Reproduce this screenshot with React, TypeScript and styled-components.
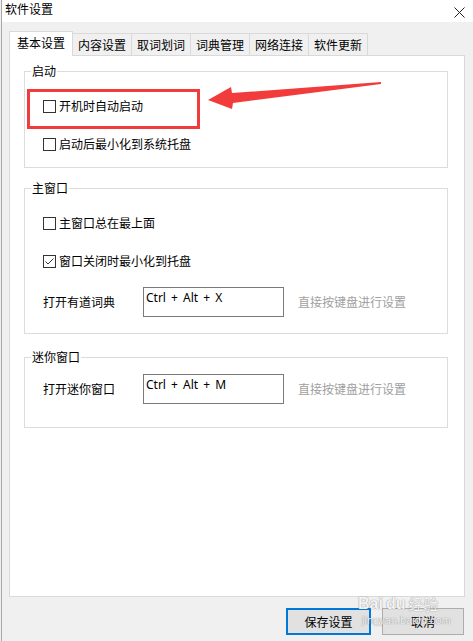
import React from "react";
import styled, { createGlobalStyle, css } from "styled-components";

const GlobalStyle = createGlobalStyle`
  html, body { margin: 0; padding: 0; background: #f0f0f0; }
  body {
    font-family: "Noto Sans CJK SC", "Noto Sans", sans-serif;
    font-size: 12px;
    color: #000;
  }
  * { box-sizing: border-box; }
`;

const Window = styled.div`
  position: relative;
  width: 472px;
  height: 641px;
  margin-left: 1px;
  display: flex;
  flex-direction: column;
  background: #f0f0f0;
  border-left: 1px solid #a8a8a8;
  overflow: hidden;
`;

const TitleBar = styled.div`
  height: 22px;
  flex: none;
  background: #fff;
  display: flex;
  justify-content: space-between;
  align-items: flex-start;
  padding: 1px 8px 0 3px;
`;

const TitleText = styled.span`
  font-size: 12px;
  line-height: 16px;
`;

const CloseBtn = styled.span`
  display: block;
  width: 11px;
  height: 11px;
  margin-top: 3px;
`;

const Body = styled.div`
  flex: 1;
  display: flex;
  flex-direction: column;
  padding: 9px 8px 6px 7px;
`;

const TabStrip = styled.div`
  display: flex;
  align-items: flex-start;
  height: 24px;
  flex: none;
  position: relative;
  z-index: 1;
`;

const Tab = styled.div<{ $active?: boolean }>`
  display: flex;
  align-items: center;
  border: 1px solid #d9d9d9;
  border-bottom: none;
  line-height: 16px;
  white-space: nowrap;
  ${(p) =>
    p.$active
      ? css`
          height: 25px;
          padding: 0 7px 2px;
          background: #fff;
        `
      : css`
          height: 22px;
          margin-top: 2px;
          margin-left: -1px;
          padding: 0 5px;
          background: #f0f0f0;
        `}
`;

const Panel = styled.div`
  flex: 1;
  background: #fff;
  border: 1px solid #d9d9d9;
  padding: 7px 16px 0 14px;
  display: flex;
  flex-direction: column;
`;

const Group = styled.fieldset<{ $pt: number; $pb: number; $mt: number }>`
  margin: ${(p) => p.$mt}px 0 0 0;
  padding: ${(p) => p.$pt}px 0 ${(p) => p.$pb}px 6px;
  border: 1px solid #dcdcdc;
  min-width: 0;
`;

const Legend = styled.legend`
  padding: 0 1px;
  line-height: 16px;
  font-size: 12px;
`;

const CheckRow = styled.label<{ $highlight?: boolean }>`
  position: relative;
  display: flex;
  align-items: center;
  gap: 3px;
  height: 38px;
  padding-left: 12px;
  line-height: 16px;
  ${(p) =>
    p.$highlight &&
    css`
      &::after {
        content: "";
        position: absolute;
        left: -4px;
        top: 2px;
        width: 167px;
        height: 34px;
        border: 3px solid #f23b3b;
        pointer-events: none;
      }
    `}
`;

const Box = styled.span`
  width: 13px;
  height: 13px;
  flex: none;
  border: 1px solid #333;
  background: #fff;
  display: flex;
  align-items: center;
  justify-content: center;
`;

const FieldRow = styled.div<{ $mt?: number }>`
  display: flex;
  align-items: center;
  padding-left: 12px;
  margin-top: ${(p) => p.$mt ?? 0}px;
  height: 30px;
  line-height: 16px;
`;

const FieldLabel = styled.span`
  width: 100px;
  flex: none;
`;

const KeyInput = styled.div`
  width: 141px;
  height: 30px;
  flex: none;
  border: 1px solid #7a7a7a;
  background: #fff;
  padding: 2px 0 0 2px;
  font-family: "Segoe UI", "Noto Sans", sans-serif;
  font-size: 12px;
  line-height: 16px;
  word-spacing: 2px;
  align-self: flex-start;
`;

const Hint = styled.span`
  margin-left: 14px;
  color: #a0a0a0;
`;

const Footer = styled.div`
  display: flex;
  justify-content: flex-end;
  gap: 11px;
  margin-top: 11px;
  padding-right: 1px;
  flex: none;
`;

const Button = styled.div<{ $primary?: boolean }>`
  height: 27px;
  width: ${(p) => (p.$primary ? 85 : 82)}px;
  display: flex;
  align-items: center;
  justify-content: center;
  background: #e1e1e1;
  border: ${(p) => (p.$primary ? "2px solid #0078d7" : "1px solid #adadad")};
  line-height: 16px;
`;

const Arrow = styled.svg`
  position: absolute;
  left: 199px;
  top: 70px;
  pointer-events: none;
`;

const Watermark = styled.div`
  position: absolute;
  left: 356px;
  top: 594px;
  width: 100px;
  color: rgba(255, 255, 255, 0.92);
  text-shadow: 0 0 1px rgba(110, 110, 110, 0.6), 0 0 1px rgba(110, 110, 110, 0.6);
  pointer-events: none;
  display: flex;
  flex-direction: column;
`;

const WmTop = styled.div`
  display: flex;
  align-items: flex-end;
  gap: 3px;
  font-family: "Liberation Sans", Arial, sans-serif;
  font-weight: bold;
  font-size: 16px;
  line-height: 20px;
`;

const WmCn = styled.span`
  font-family: "Noto Sans CJK SC", sans-serif;
  font-size: 15px;
  font-weight: normal;
  line-height: 20px;
`;

const WmUrl = styled.div`
  font-family: "Liberation Sans", Arial, sans-serif;
  font-size: 11px;
  line-height: 12px;
  padding-left: 4px;
`;

const Check = ({ checked }: { checked?: boolean }) => (
  <Box>
    {checked && (
      <svg width="11" height="11" viewBox="0 0 11 11">
        <polyline points="1.5,5.5 4,8 9.5,2.5" fill="none" stroke="#333" strokeWidth="1" />
      </svg>
    )}
  </Box>
);

const tabs = ["基本设置", "内容设置", "取词划词", "词典管理", "网络连接", "软件更新"];

export default function App() {
  return (
    <>
      <GlobalStyle />
      <Window>
        <TitleBar>
          <TitleText>软件设置</TitleText>
          <CloseBtn>
            <svg width="11" height="11" viewBox="0 0 11 11">
              <path d="M0.5 0.5 L10.5 10.5 M10.5 0.5 L0.5 10.5" stroke="#222" strokeWidth="1" />
            </svg>
          </CloseBtn>
        </TitleBar>
        <Body>
          <TabStrip>
            {tabs.map((t, i) => (
              <Tab key={t} $active={i === 0}>
                {t}
              </Tab>
            ))}
          </TabStrip>
          <Panel>
            <Group $mt={0} $pt={8} $pb={4}>
              <Legend>启动</Legend>
              <CheckRow $highlight>
                <Check />
                开机时自动启动
              </CheckRow>
              <CheckRow>
                <Check />
                启动后最小化到系统托盘
              </CheckRow>
            </Group>
            <Group $mt={12} $pt={8} $pb={16}>
              <Legend>主窗口</Legend>
              <CheckRow>
                <Check />
                主窗口总在最上面
              </CheckRow>
              <CheckRow>
                <Check checked />
                窗口关闭时最小化到托盘
              </CheckRow>
              <FieldRow $mt={7}>
                <FieldLabel>打开有道词典</FieldLabel>
                <KeyInput>Ctrl + Alt + X</KeyInput>
                <Hint>直接按键盘进行设置</Hint>
              </FieldRow>
            </Group>
            <Group $mt={15} $pt={9} $pb={23}>
              <Legend>迷你窗口</Legend>
              <FieldRow>
                <FieldLabel>打开迷你窗口</FieldLabel>
                <KeyInput>Ctrl + Alt + M</KeyInput>
                <Hint>直接按键盘进行设置</Hint>
              </FieldRow>
            </Group>
          </Panel>
          <Footer>
            <Button $primary>保存设置</Button>
            <Button>取消</Button>
          </Footer>
        </Body>
        <Arrow width="190" height="45" viewBox="0 0 190 45">
          <polygon
            points="7,30 30,17 31,23 180,12 180,14 32,33 31,39"
            fill="#f23c3c"
          />
        </Arrow>
        <Watermark>
          <WmTop>
            <span>Bai</span>
            <span>du</span>
            <WmCn>经验</WmCn>
          </WmTop>
          <WmUrl>jingyan.baidu.com</WmUrl>
        </Watermark>
      </Window>
    </>
  );
}
